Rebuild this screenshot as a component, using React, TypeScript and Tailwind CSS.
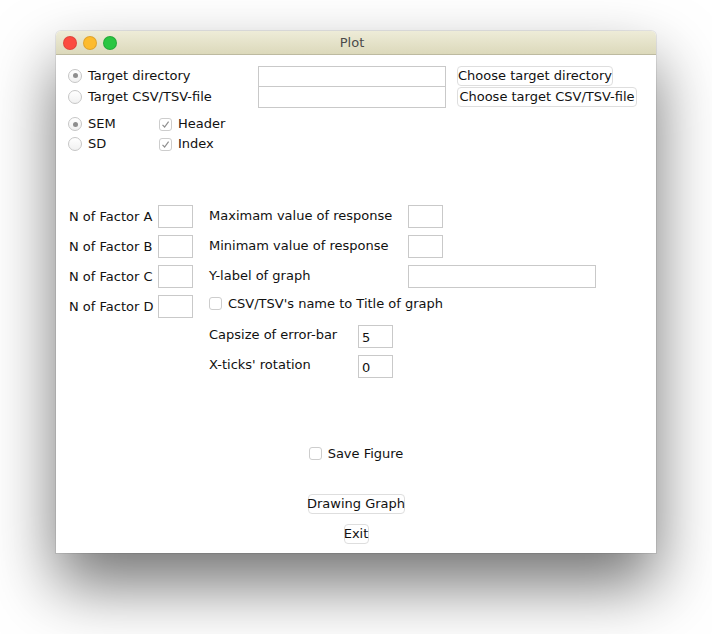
import React from "react";

const font = { fontFamily: '"DejaVu Sans", "Liberation Sans", sans-serif' };

function Radio({ checked, label }: { checked?: boolean; label: string }) {
  return (
    <div className="flex items-center">
      <span className="flex h-[14px] w-[14px] items-center justify-center rounded-full border border-[#c6c6c6] bg-gradient-to-b from-white to-[#f1f1f1]">
        {checked && <span className="h-[5px] w-[5px] rounded-full bg-[#8e8e8e]" />}
      </span>
      <span className="ml-[6px] whitespace-nowrap">{label}</span>
    </div>
  );
}

function Check({ checked, label }: { checked?: boolean; label: string }) {
  return (
    <div className="flex items-center">
      <span className="flex h-[13px] w-[13px] items-center justify-center rounded-[3px] border border-[#cdcdcd] bg-white">
        {checked && (
          <svg width="9" height="9" viewBox="0 0 9 9">
            <path d="M1.5 4.8 L3.6 7 L7.6 1.6" fill="none" stroke="#8f8f8f" strokeWidth="1.2" />
          </svg>
        )}
      </span>
      <span className="ml-[6px] whitespace-nowrap">{label}</span>
    </div>
  );
}

function Entry({ w, h = 23, value }: { w: number; h?: number; value?: string }) {
  return (
    <div
      className="flex items-center border border-[#c9c9c9] bg-white pl-[3px] pt-[2px]"
      style={{ width: w, height: h }}
    >
      {value}
    </div>
  );
}

function Button({ children, w }: { children: React.ReactNode; w: number }) {
  return (
    <div
      className="flex h-[20px] items-center justify-center whitespace-nowrap rounded-[4px] border border-[#dedede] bg-white"
      style={{ width: w }}
    >
      {children}
    </div>
  );
}

export default function App() {
  return (
    <div className="h-[634px] w-[712px] bg-white pl-[56px] pt-[31px] text-[13px] text-[#111]" style={font}>
      <div className="w-[600px] rounded-t-[5px] bg-white shadow-[0_32px_64px_0_rgba(0,0,0,0.55),0_0_0_1px_rgba(0,0,0,0.08)]">
        {/* title bar */}
        <div className="flex h-[24px] items-center rounded-t-[5px] border-b border-[#bdbaa0] bg-gradient-to-b from-[#eeecd8] to-[#dcd9bb] px-[8px]">
          <div className="flex w-[60px] gap-[8px]">
            <span className="h-[12px] w-[12px] rounded-full bg-[#fc4b3f] ring-1 ring-[#e0443a]" />
            <span className="h-[12px] w-[12px] rounded-full bg-[#fdbb2c] ring-1 ring-[#e0a32a]" />
            <span className="h-[12px] w-[12px] rounded-full bg-[#2ac641] ring-1 ring-[#24a938]" />
          </div>
          <div className="flex-1 pr-[68px] text-center text-[#4a4a4a]">Plot</div>
        </div>

        {/* content */}
        <div className="flex h-[498px] flex-col">
          <div className="flex flex-col pl-[12px] pt-[10px]">
            <div className="flex h-[21px] items-center">
              <div className="w-[190px]">
                <Radio checked label="Target directory" />
              </div>
              <div className="h-[20px] w-[188px] border-x border-t border-[#c9c9c9]" />
              <div className="ml-[11px]">
                <Button w={156}>Choose target directory</Button>
              </div>
            </div>
            <div className="flex h-[22px] items-center">
              <div className="w-[190px]">
                <Radio label="Target CSV/TSV-file" />
              </div>
              <Entry w={188} h={22} />
              <div className="ml-[11px]">
                <Button w={180}>Choose target CSV/TSV-file</Button>
              </div>
            </div>
            <div className="mt-[6px] flex h-[20px] items-center">
              <div className="w-[91px]">
                <Radio checked label="SEM" />
              </div>
              <Check checked label="Header" />
            </div>
            <div className="flex h-[20px] items-center">
              <div className="w-[91px]">
                <Radio label="SD" />
              </div>
              <Check checked label="Index" />
            </div>
          </div>

          <div className="mt-[51px] flex">
            <div className="flex w-[153px] flex-col gap-[7px] pl-[13px]">
              {["A", "B", "C", "D"].map((f) => (
                <div key={f} className="flex h-[23px] items-center">
                  <span className="w-[89px] whitespace-nowrap">N of Factor {f}</span>
                  <Entry w={35} />
                </div>
              ))}
            </div>
            <div className="flex flex-col">
              <div className="flex h-[23px] items-center">
                <span className="w-[199px] pb-[2px]">Maximam value of response</span>
                <Entry w={35} />
              </div>
              <div className="mt-[7px] flex h-[23px] items-center">
                <span className="w-[199px] pb-[2px]">Minimam value of response</span>
                <Entry w={35} />
              </div>
              <div className="mt-[7px] flex h-[23px] items-center">
                <span className="w-[199px] pb-[2px]">Y-label of graph</span>
                <Entry w={188} />
              </div>
              <div className="mt-[7px] flex h-[17px] items-center">
                <Check label="CSV/TSV's name to Title of graph" />
              </div>
              <div className="mt-[13px] flex h-[23px] items-center">
                <span className="w-[149px] pb-[4px]">Capsize of error-bar</span>
                <Entry w={35} value="5" />
              </div>
              <div className="mt-[7px] flex h-[23px] items-center">
                <span className="w-[149px] pb-[4px]">X-ticks' rotation</span>
                <Entry w={35} value="0" />
              </div>
            </div>
          </div>

          <div className="mt-[66px] flex justify-center">
            <Check label="Save Figure" />
          </div>
          <div className="mt-[30px] flex justify-center">
            <Button w={97}>Drawing Graph</Button>
          </div>
          <div className="mt-[10px] flex justify-center">
            <Button w={25}>Exit</Button>
          </div>
        </div>
      </div>
    </div>
  );
}
